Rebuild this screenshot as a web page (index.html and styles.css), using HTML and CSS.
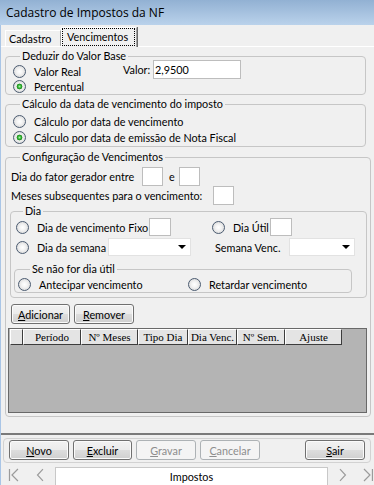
FILE: index.html
```html
<!DOCTYPE html>
<html lang="pt-BR">
  <head>
    <meta charset="UTF-8" />
    <title>Cadastro de Impostos da NF</title>
    <link rel="stylesheet" href="styles.css">
  </head>
  <body>
    <div class="titlebar">Cadastro de Impostos da NF</div>

    <div class="frame">
      <!-- Abas -->
      <div class="tabs">
        <div class="tab">Cadastro</div>
        <div class="tab active"><span class="focus">Vencimentos</span></div>
      </div>

      <div class="panel">
        <fieldset class="group g-base">
          <legend>Deduzir do Valor Base</legend>
          <div class="base-body">
            <div class="radios">
              <div class="opt"><span class="radio"></span>Valor Real</div>
              <div class="opt"><span class="radio checked"></span>Percentual</div>
            </div>
            <div class="valor">
              <span class="valor-label">Valor:</span>
              <span class="edit valor-edit">2,9500</span>
            </div>
          </div>
        </fieldset>

        <fieldset class="group g-calc">
          <legend>Cálculo da data de vencimento do imposto</legend>
          <div class="opt tall"><span class="radio"></span>Cálculo por data de vencimento</div>
          <div class="opt tall"><span class="radio checked"></span>Cálculo por data de emissão de Nota Fiscal</div>
        </fieldset>

        <fieldset class="group g-conf">
          <legend>Configuração de Vencimentos</legend>
          <div class="line first">
            <span class="lbl-fator">Dia do fator gerador entre</span>
            <span class="edit sm"></span>
            <span class="lbl-e">e</span>
            <span class="edit sm"></span>
          </div>
          <div class="line">
            <span class="lbl-meses">Meses subsequentes para o vencimento:</span>
            <span class="edit sm"></span>
          </div>

          <fieldset class="group g-dia">
            <legend>Dia</legend>
            <div class="dia-row">
              <div class="dia-left">
                <div class="opt w-fixo"><span class="radio"></span>Dia de vencimento Fixo</div>
                <span class="edit xs"></span>
              </div>
              <div class="dia-right">
                <div class="opt w-util"><span class="radio"></span>Dia Útil</div>
                <span class="edit xs"></span>
              </div>
            </div>
            <div class="dia-row second">
              <div class="dia-left">
                <div class="opt w-semana"><span class="radio"></span>Dia da semana</div>
                <span class="combo c-semana"><span class="arrow"></span></span>
              </div>
              <div class="dia-right pad">
                <span class="w-venc">Semana Venc.</span>
                <span class="combo c-venc"><span class="arrow"></span></span>
              </div>
            </div>

            <fieldset class="group g-util">
              <legend>Se não for dia útil</legend>
              <div class="util-row">
                <div class="opt w-antec"><span class="radio"></span>Antecipar vencimento</div>
                <div class="opt"><span class="radio"></span>Retardar vencimento</div>
              </div>
            </fieldset>
          </fieldset>

          <div class="grid-buttons">
            <button class="btn w59"><u>A</u>dicionar</button>
            <button class="btn w60"><u>R</u>emover</button>
          </div>

          <div class="grid">
            <div class="grid-head">
              <span class="hc c0"></span>
              <span class="hc c1">Período</span>
              <span class="hc c2">Nº Meses</span>
              <span class="hc c3">Tipo Dia</span>
              <span class="hc c4">Dia Venc.</span>
              <span class="hc c5">Nº Sem.</span>
              <span class="hc c6">Ajuste</span>
            </div>
          </div>
        </fieldset>
      </div>

      <!-- Barra de botoes -->
      <div class="footer">
        <div class="actions">
          <button class="btn"><u>N</u>ovo</button>
          <button class="btn w59"><u>E</u>xcluir</button>
          <button class="btn off"><u>G</u>ravar</button>
          <button class="btn off"><u>C</u>ancelar</button>
          <button class="btn sair"><u>S</u>air</button>
        </div>

        <div class="nav">
          <svg class="nav-ico first-ico" width="12" height="14" viewBox="0 0 12 14">
            <path d="M1.5 1 V13 M10 1 L4 7 L10 13" fill="none" stroke="#9b9b9b" stroke-width="1.2"/>
          </svg>
          <svg class="nav-ico prev-ico" width="8" height="14" viewBox="0 0 8 14">
            <path d="M7 1 L1.5 7 L7 13" fill="none" stroke="#9b9b9b" stroke-width="1.2"/>
          </svg>
          <div class="nav-box">Impostos</div>
          <svg class="nav-ico next-ico" width="8" height="14" viewBox="0 0 8 14">
            <path d="M1 1 L6.5 7 L1 13" fill="none" stroke="#9b9b9b" stroke-width="1.2"/>
          </svg>
          <svg class="nav-ico last-ico" width="12" height="14" viewBox="0 0 12 14">
            <path d="M2 1 L8 7 L2 13 M10.5 1 V13" fill="none" stroke="#9b9b9b" stroke-width="1.2"/>
          </svg>
        </div>
      </div>
    </div>
  </body>
</html>
```

FILE: styles.css
```css
/* Reset */
* {
  margin: 0;
  padding: 0;
  box-sizing: border-box;
}

body {
  width: 374px;
  height: 485px;
  overflow: hidden;
  background: #f0f0f0;
  font-family: Lato, "Open Sans", sans-serif;
  font-size: 10.8px;
  color: #000;
  white-space: nowrap;
}

/* Window title */
.titlebar {
  height: 25px;
  line-height: 26px;
  padding-left: 6px;
  font-family: "Open Sans", sans-serif;
  font-size: 12px;
  background: linear-gradient(#92b1d3, #bad2eb);
}

.frame {
  border-left: 1px solid #a9c5e6;
  height: 460px;
}

/* Tabs */
.tabs {
  display: flex;
  align-items: flex-end;
  height: 22px;
  padding-left: 4px;
  border-bottom: 1px solid #fff;
}

.tab {
  width: 56px;
  height: 16px;
  line-height: 15px;
  padding-left: 3px;
  border-top: 1px solid #fff;
  border-left: 1px solid #fff;
  border-right: 1px solid #a0a0a0;
}

.tab.active {
  width: 76px;
  height: 20px;
  margin-bottom: -1px;
  padding-left: 0;
  background: #f0f0f0;
  border-right: 1px solid #a0a0a0;
  box-shadow: 1px 0 0 #696969;
}

.focus {
  display: block;
  width: 73px;
  height: 18px;
  line-height: 16px;
  padding-left: 4px;
  border: 1px dotted #000;
}

/* Group boxes */
.panel {
  height: 384px;
}

.group {
  border: 1px solid #c6c6c6;
  border-radius: 4px;
  min-width: 0;
}

.group legend {
  line-height: 14px;
  padding: 0 2px;
}

.g-base {
  margin: 2px 8px 0 4px;
  padding: 1px 0 0 7px;
}

.g-base legend,
.g-calc legend {
  margin-left: 7px;
}

.base-body {
  display: flex;
}

.radios {
  width: 110px;
}

.opt {
  display: flex;
  align-items: center;
  height: 15px;
}

.opt.tall {
  height: 16px;
}

.radio {
  flex: none;
  width: 13px;
  height: 13px;
  margin-right: 8px;
  border-radius: 50%;
  border: 1px solid #4b5b70;
  background: radial-gradient(circle, #ffffff 0, #f4f4f4 35%, #cfcfcf 100%);
}

.radio.checked {
  background:
    radial-gradient(circle, #a7f2a7 0, #37b437 1.6px, #178c17 2.6px, rgba(23, 140, 23, 0) 3.2px),
    radial-gradient(circle, #ffffff 0, #f4f4f4 35%, #cfcfcf 100%);
}

.valor {
  display: flex;
  align-items: center;
  height: 19px;
  margin-top: -4px;
}

.valor-label {
  width: 30px;
}

.edit {
  display: block;
  flex: none;
  height: 19px;
  line-height: 17px;
  padding-left: 1px;
  background: #fff;
  border: 1px solid #bdbdbd;
}

.valor-edit {
  width: 88px;
}

.g-calc {
  margin: 2px 8px 0 4px;
  padding: 2px 0 1px 7px;
}

/* Configuração de Vencimentos */
.g-conf {
  margin: 3px 3px 0 4px;
  padding: 0 3px 3px 4px;
}

.g-conf > legend {
  margin-left: 10px;
}

.line {
  display: flex;
  align-items: center;
  height: 19px;
  padding-left: 1px;
}

.line.first {
  margin-top: 3px;
}

.lbl-fator {
  width: 131px;
}

.lbl-e {
  width: 16px;
  padding-left: 6px;
}

.lbl-meses {
  width: 202px;
}

.edit.sm {
  width: 21px;
}

.edit.xs {
  width: 22px;
  height: 18px;
}

.g-dia {
  margin-top: -1px;
  padding: 0 0 4px 5px;
}

.g-dia > legend {
  margin-left: 7px;
}

.dia-row {
  display: flex;
  align-items: center;
  height: 18px;
}

.dia-row.second {
  margin-top: 2px;
}

.dia-left {
  display: flex;
  align-items: center;
  width: 196px;
}

.dia-right {
  display: flex;
  align-items: center;
}

.dia-right.pad {
  padding-left: 3px;
}

.w-fixo {
  width: 133px;
}

.w-util {
  width: 58px;
}

.w-semana {
  width: 92px;
}

.w-venc {
  width: 74px;
}

.combo {
  position: relative;
  display: block;
  flex: none;
  height: 18px;
  background: #fff;
  border: 1px solid #e2e2e2;
}

.c-semana {
  width: 83px;
}

.c-venc {
  width: 66px;
}

/* dropdown arrow sits over the combo */
.combo .arrow {
  position: absolute;
  right: 4px;
  top: 6px;
  border-left: 4px solid transparent;
  border-right: 4px solid transparent;
  border-top: 4px solid #000;
}

.g-util {
  width: 338px;
  margin: 6px 0 0 -2px;
  padding: 0 0 0 3px;
}

.g-util > legend {
  margin-left: 12px;
}

.util-row {
  display: flex;
  align-items: center;
  height: 16px;
}

.w-antec {
  width: 170px;
}

/* Buttons */
.btn {
  width: 60px;
  height: 20px;
  font-family: Lato, "Open Sans", sans-serif;
  font-size: 10.8px;
  color: #000;
  border: 1px solid #707070;
  border-radius: 3px;
  background: linear-gradient(#f2f2f2 0%, #ebebeb 48%, #dddddd 52%, #cfcfcf 100%);
  box-shadow: inset 0 0 0 1px #fbfbfb;
}

.btn.w59 {
  width: 59px;
}

.btn.off {
  color: #8d8d8d;
  border-color: #adb2b5;
  background: #f4f4f4;
  box-shadow: none;
}

.grid-buttons {
  display: flex;
  gap: 4px;
  margin-top: 6px;
  padding-left: 1px;
}

/* Grid */
.grid {
  width: 359px;
  height: 85px;
  margin: 4px 0 0 -2px;
  padding-left: 1px;
  background: #b4b4b4;
  border: 1px solid #696969;
}

.grid-head {
  display: flex;
}

.hc {
  height: 16px;
  line-height: 14px;
  text-align: center;
  font-family: "Liberation Serif", serif;
  font-size: 11px;
  background: #e4e4e4;
  border-top: 1px solid #fff;
  border-left: 1px solid #fff;
  border-right: 1px solid #3c3c3c;
  border-bottom: 1px solid #3c3c3c;
}

.c0 { width: 13px; }
.c1 { width: 58px; }
.c2 { width: 57px; }
.c3 { width: 50px; }
.c4 { width: 49px; }
.c5 { width: 48px; }
.c6 { width: 57px; }

/* Footer */
.footer {
  border-top: 2px solid #7a7a7a;
}

.actions {
  display: flex;
  gap: 4px;
  height: 25px;
  margin: 3px 3px 0 2px;
  padding: 1px 5px 0 5px;
  border: 1px solid #d2d2d2;
  border-radius: 4px;
}

.btn.sair {
  margin-left: auto;
}

.nav {
  display: flex;
  align-items: flex-end;
  height: 24px;
}

.nav-ico {
  margin-bottom: 5px;
}

.first-ico {
  margin-left: 7px;
}

.prev-ico {
  margin-left: 16px;
}

.nav-box {
  width: 275px;
  height: 20px;
  margin-left: 11px;
  line-height: 18px;
  text-align: center;
  background: #fff;
  border: 1px solid #c8c8c8;
  border-bottom: none;
}

.next-ico {
  margin-left: 11px;
}

.last-ico {
  margin-left: 15px;
}
```
